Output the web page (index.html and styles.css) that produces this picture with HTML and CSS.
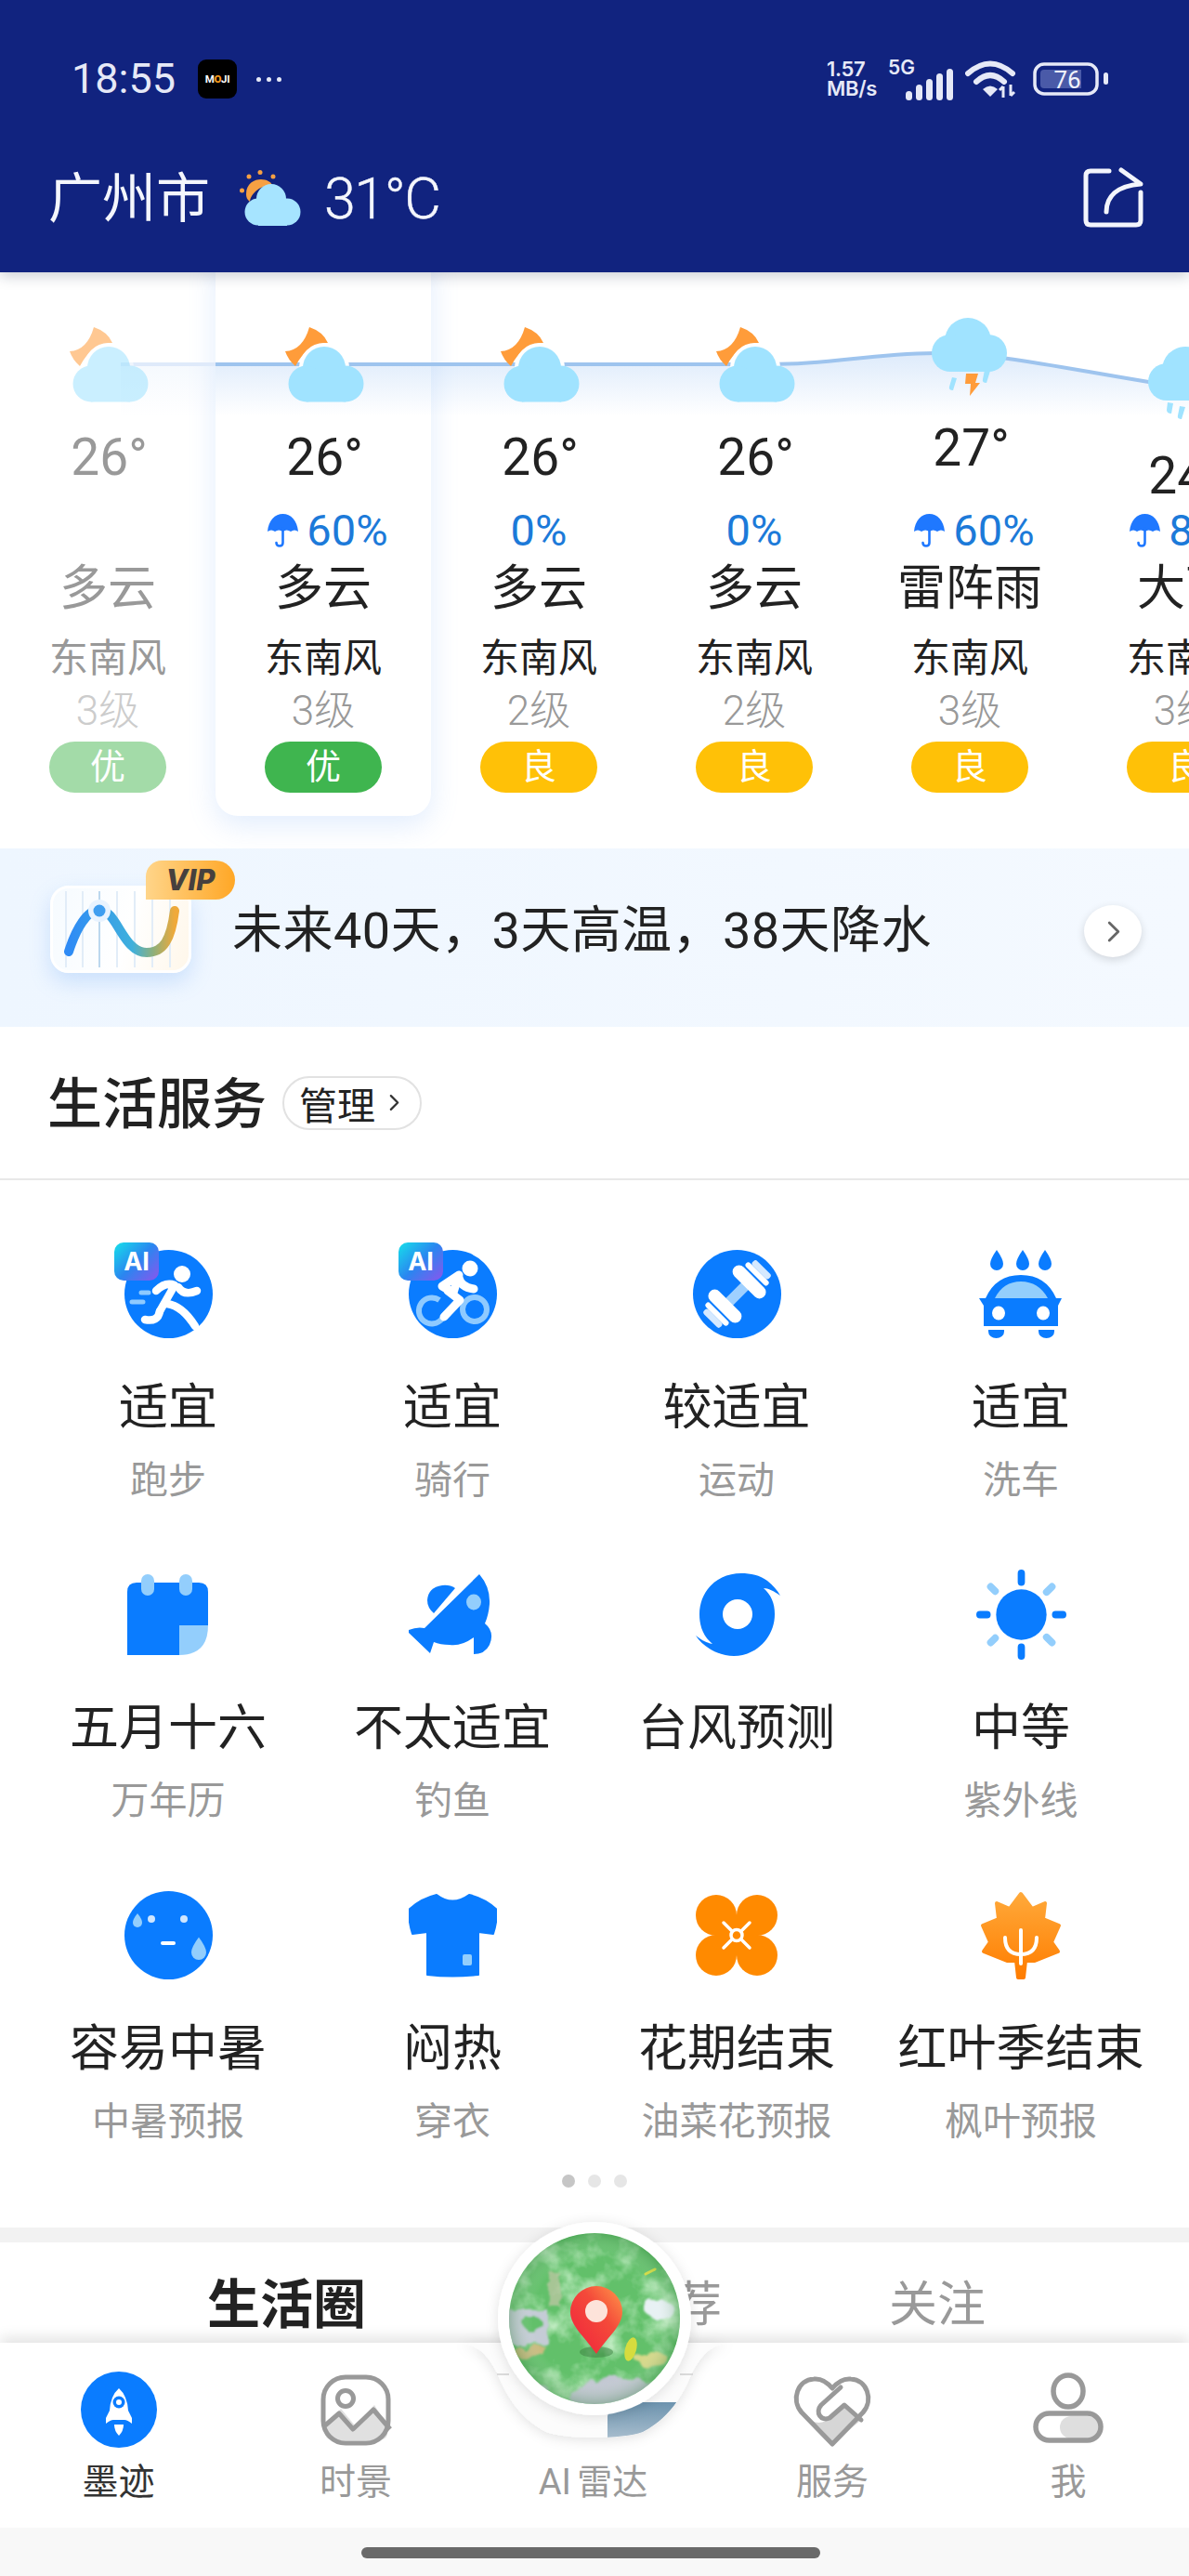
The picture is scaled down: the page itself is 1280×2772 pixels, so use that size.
FILE: index.html
```html
<!DOCTYPE html>
<html lang="zh-CN">
<head>
<meta charset="utf-8">
<title>墨迹天气</title>
<link rel="stylesheet" href="styles.css">
</head>
<body>
<svg class="defs" width="0" height="0" aria-hidden="true">
  <defs>
    <symbol id="partly" viewBox="0 0 100 90">
      <path class="sun" d="M35 7Q50 12 55 24Q33 24 20 49Q12 42 9 33Q28 32 35 7Z"/>
      <circle cx="51" cy="51" r="27" fill="#fff"/>
      <g class="cloud"><circle cx="51" cy="51" r="23"/><circle cx="32" cy="68" r="19.5"/><circle cx="74" cy="68" r="19.5"/><rect x="32" y="60" width="42" height="27.5"/></g>
    </symbol>
    <symbol id="thunder" viewBox="0 0 100 90">
      <g class="cloud"><circle cx="48" cy="27" r="25"/><circle cx="29" cy="40" r="20"/><circle cx="70" cy="40" r="20"/><rect x="29" y="35" width="41" height="25"/></g>
      <path class="rain" d="M31 66l5 1-4 13q-5 0-4-4zM66 58l6 1-4 13q-5 0-4-4z"/>
      <path class="sun" d="M46 62h13l-3 10h5L50 86l1-13h-6z"/>
    </symbol>
    <symbol id="rainy" viewBox="0 0 100 90">
      <g class="cloud"><circle cx="50" cy="27" r="25"/><circle cx="30" cy="40" r="20"/><circle cx="71" cy="40" r="20"/><rect x="30" y="35" width="41" height="25"/></g>
      <path class="rain" d="M31 62l6 1-2 11q-5 0-5-4zM44 66l6 1-4 13q-5 0-4-4z"/>
    </symbol>
    <symbol id="umbrella" viewBox="0 0 33 36">
      <path fill="#1f78ff" d="M16.5 0C8 0 1 7 0 19q4-3 8 0q4-3 8.5 0q4-3 8.500 0q4-3 8 0C32 7 25 0 16.500 0Z"/>
      <path fill="none" stroke="#1f78ff" stroke-width="2.600" stroke-linecap="round" d="M16.500 16V31q0 3.500-3.500 3.500t-3.500-3.500"/>
    </symbol>
  </defs>
</svg>

<div class="page">
  <header class="top">
    <div class="status">
      <span class="time">18:55</span>
      <span class="moji">M<b>O</b>JI</span>
      <span class="more"><i></i><i></i><i></i></span>
      <div class="status-right">
        <span class="speed">1.57<br>MB/s</span>
        <span class="net">
          <span class="fiveg">5G</span>
          <svg class="signal" viewBox="0 0 52 34" width="52" height="34"><g fill="#e6e9f7"><rect x="0" y="24" width="7" height="10" rx="3.500"/><rect x="11" y="17" width="7" height="17" rx="3.500"/><rect x="22" y="11" width="7" height="23" rx="3.500"/><rect x="33" y="5" width="7" height="29" rx="3.500"/><rect x="44" y="0" width="7" height="34" rx="3.500"/></g></svg>
        </span>
        <svg class="wifi" viewBox="0 0 56 40" width="56" height="40"><g fill="none" stroke="#e6e9f7" stroke-width="6" stroke-linecap="round"><path d="M3 14Q27-7 51 14"/><path d="M12 23Q27 9 42 23"/></g><path fill="#e6e9f7" d="M19 31q8-7 16 0l-8 8z"/><path fill="none" stroke="#e6e9f7" stroke-width="3" d="M41 40V28M37 32l4-4M49 26V38M49 38l4-4"/></svg>
        <svg class="battery" viewBox="0 0 82 36" width="82" height="36"><rect x="2" y="2" width="67" height="32" rx="10" fill="none" stroke="#e6e9f7" stroke-width="3.500"/><path d="M12 8h40v20H12q-4 0-4-4V12q0-4 4-4z" fill="#4a5aa8"/><text class="bat-num" x="37" y="28">76</text><rect x="76" y="11" width="5" height="13" rx="2.500" fill="#e6e9f7"/></svg>
      </div>
    </div>
    <div class="title-row">
      <span class="city">广州市</span>
      <svg class="now-icon" viewBox="0 0 66 60" width="66" height="60"><g fill="#f6a043"><circle cx="22" cy="2.500" r="2.500"/><circle cx="10" cy="7" r="2.500"/><circle cx="36" cy="7" r="2.500"/><circle cx="2.500" cy="22" r="2.500"/><path d="M7 26C7 14 16 10 23 10c6 0 11 3 12 6C24 16 12 24 11 34 8 32 7 29 7 26Z"/></g><g fill="#a6e4ff"><circle cx="34" cy="31" r="16"/><circle cx="20" cy="45" r="14.500"/><circle cx="51" cy="45" r="14.500"/><rect x="20" y="40" width="31" height="20"/></g></svg>
      <span class="now-temp">31°C</span>
      <svg class="share" viewBox="0 0 66 66" width="66" height="66"><g fill="none" stroke="#f3f5fc" stroke-width="5" stroke-linecap="round" stroke-linejoin="round"><path d="M28 4H8Q3 4 3 9V57Q3 62 8 62H57Q62 62 62 57V27"/><path d="M25 48C25 32 36 20 62 18L41 3"/></g></svg>
    </div>
  </header>

  <section class="hourly">
    <div class="hour-card"></div>
    <svg class="curve" viewBox="0 0 1280 200" width="1280" height="200">
      <defs><linearGradient id="area" gradientUnits="userSpaceOnUse" x1="0" y1="88" x2="0" y2="155"><stop offset="0" stop-color="#8fbcf2" stop-opacity=".3"/><stop offset="1" stop-color="#8fbcf2" stop-opacity="0"/></linearGradient></defs>
      <path fill="url(#area)" d="M232 99H830C900 99 930 88 1007 87C1080 87 1150 105 1280 125V200H232Z"/>
      <path fill="url(#area)" opacity=".35" d="M130 99H232V200H130Z"/>
      <path fill="none" stroke="#dfeafa" stroke-width="4" d="M130 99H232"/>
      <path fill="none" stroke="#9ec4ee" stroke-width="4" d="M232 99H830C900 99 930 88 1007 87C1080 87 1150 105 1280 125"/>
    </svg>
    <div class="hour-row">
      <article class="hour past">
        <div class="hour-top"><svg class="wx-icon faded"><use href="#partly"/></svg><div class="temp">26°</div></div>
        <div class="pop"></div><div class="wx">多云</div><div class="wind">东南风</div><div class="lvl">3级</div><div class="badge good light">优</div>
      </article>
      <article class="hour">
        <div class="hour-top"><svg class="wx-icon"><use href="#partly"/></svg><div class="temp">26°</div></div>
        <div class="pop"><svg class="umb"><use href="#umbrella"/></svg>60%</div><div class="wx">多云</div><div class="wind">东南风</div><div class="lvl">3级</div><div class="badge good">优</div>
      </article>
      <article class="hour">
        <div class="hour-top"><svg class="wx-icon"><use href="#partly"/></svg><div class="temp">26°</div></div>
        <div class="pop">0%</div><div class="wx">多云</div><div class="wind">东南风</div><div class="lvl">2级</div><div class="badge fair">良</div>
      </article>
      <article class="hour">
        <div class="hour-top"><svg class="wx-icon"><use href="#partly"/></svg><div class="temp">26°</div></div>
        <div class="pop">0%</div><div class="wx">多云</div><div class="wind">东南风</div><div class="lvl">2级</div><div class="badge fair">良</div>
      </article>
      <article class="hour">
        <div class="hour-top high"><svg class="wx-icon"><use href="#thunder"/></svg><div class="temp">27°</div></div>
        <div class="pop"><svg class="umb"><use href="#umbrella"/></svg>60%</div><div class="wx">雷阵雨</div><div class="wind">东南风</div><div class="lvl">3级</div><div class="badge fair">良</div>
      </article>
      <article class="hour">
        <div class="hour-top low"><svg class="wx-icon"><use href="#rainy"/></svg><div class="temp">24°</div></div>
        <div class="pop"><svg class="umb"><use href="#umbrella"/></svg>80%</div><div class="wx">大雨</div><div class="wind">东南风</div><div class="lvl">3级</div><div class="badge fair">良</div>
      </article>
    </div>
  </section>

  <section class="forecast">
    <div class="fc-icon">
      <svg viewBox="0 0 152 94" width="152" height="94">
        <defs><linearGradient id="fcline" x1="0" x2="1" y1="0" y2="0"><stop offset="0" stop-color="#2f8bf5"/><stop offset=".6" stop-color="#3fb0dc"/><stop offset=".8" stop-color="#8fb07a"/><stop offset="1" stop-color="#f0a93a"/></linearGradient></defs>
        <g stroke="#e2edf8" stroke-width="2"><path d="M17 6V88M35 6V88M72 6V88M91 6V88M110 6V88M129 6V88"/></g>
        <path stroke="#bcd8ee" stroke-width="2" d="M53 6V88"/>
        <path fill="none" stroke="url(#fcline)" stroke-width="10" stroke-linecap="round" d="M20 71C28 46 40 26 53 26C72 26 78 72 104 72C122 72 130 58 134 27"/>
        <circle cx="53" cy="27" r="12" fill="#e8f3ff"/><circle cx="53" cy="27" r="6.500" fill="#3f9ef0"/>
      </svg>
      <span class="vip">VIP</span>
    </div>
    <span class="fc-text">未来40天，3天高温，38天降水</span>
    <span class="fc-go"><svg viewBox="0 0 20 30" width="16" height="25"><path d="M4 3l12 12L4 27" fill="none" stroke="#666" stroke-width="3.500" stroke-linecap="round" stroke-linejoin="round"/></svg></span>
  </section>

  <section class="svc-head">
    <h2 class="svc-title">生活服务</h2>
    <span class="manage">管理<svg viewBox="0 0 12 20" width="11" height="19"><path d="M2 2l8 8-8 8" fill="none" stroke="#333" stroke-width="2.500" stroke-linecap="round" stroke-linejoin="round"/></svg></span>
  </section>

  <section class="services">
    <div class="grid">
      <div class="cell">
        <div class="ico">
          <svg viewBox="0 0 95 95" width="95" height="95"><circle cx="47.500" cy="47.500" r="47.500" fill="#0a7cff"/><circle cx="62" cy="26" r="9" fill="#fff"/><g fill="none" stroke="#fff" stroke-width="8.500" stroke-linecap="round" stroke-linejoin="round"><path d="M34 44Q44 34 54 38L38 66"/><path d="M58 40Q64 50 78 44"/><path d="M46 58Q62 60 76 82"/><path d="M38 66Q36 78 22 75"/></g><g stroke="#8fcaff" stroke-width="5" stroke-linecap="round"><path d="M18 46H26M8 56H20"/></g></svg>
          <span class="ai">AI</span>
        </div>
        <div class="val">适宜</div><div class="sub">跑步</div>
      </div>
      <div class="cell">
        <div class="ico">
          <svg viewBox="0 0 95 95" width="95" height="95"><circle cx="47.500" cy="47.500" r="47.500" fill="#0a7cff"/><g fill="none" stroke="#8fcaff" stroke-width="6"><path d="M33 54A14 14 0 1 0 36 74"/><circle cx="71" cy="64" r="13"/></g><circle cx="66" cy="20" r="8.500" fill="#fff"/><g fill="none" stroke="#fff" stroke-width="9" stroke-linecap="round" stroke-linejoin="round"><path d="M36 39L54 27L48 46L36 39"/><path d="M54 30Q56 40 70 42"/><path d="M42 44L55 54L38 72"/></g></svg>
          <span class="ai">AI</span>
        </div>
        <div class="val">适宜</div><div class="sub">骑行</div>
      </div>
      <div class="cell">
        <div class="ico">
          <svg viewBox="0 0 95 95" width="95" height="95"><circle cx="47.500" cy="47.500" r="47.500" fill="#0a7cff"/><g transform="rotate(-45 47.500 47.500)"><rect x="24" y="42" width="47" height="11" fill="#9fd0ff"/><rect x="7" y="35" width="7" height="25" rx="3" fill="#d5e9ff"/><rect x="81" y="35" width="7" height="25" rx="3" fill="#d5e9ff"/><rect x="14" y="31" width="6" height="33" rx="3" fill="#fff"/><rect x="75" y="31" width="6" height="33" rx="3" fill="#fff"/><rect x="22" y="25" width="14" height="45" rx="7" fill="#fff"/><rect x="59" y="25" width="14" height="45" rx="7" fill="#fff"/></g></svg>
        </div>
        <div class="val">较适宜</div><div class="sub">运动</div>
      </div>
      <div class="cell">
        <div class="ico">
          <svg viewBox="0 0 95 95" width="95" height="95"><g fill="#0a7cff"><path d="M21 0Q28 10 28 15a7 7 0 0 1-14 0Q14 10 21 0Z"/><path d="M49 0Q56 10 56 15a7 7 0 0 1-14 0Q42 10 49 0Z"/><path d="M73 0Q80 10 80 15a7 7 0 0 1-14 0Q66 10 73 0Z"/><path d="M7 82V60L2 52H9Q20 27 47 27Q74 27 85 52H91L87 60V82Z"/><path d="M12 86H29V88A8.500 7 0 0 1 12 88Z"/><path d="M66 86H83V88A8.500 7 0 0 1 66 88Z"/></g><path d="M19 52Q28 34 47 34Q66 34 76 52Z" fill="#93cefc"/><ellipse cx="23" cy="68" rx="7" ry="7.500" fill="#fff"/><ellipse cx="71" cy="68" rx="7" ry="7.500" fill="#fff"/></svg>
        </div>
        <div class="val">适宜</div><div class="sub">洗车</div>
      </div>

      <div class="cell">
        <div class="ico">
          <svg viewBox="0 0 95 95" width="95" height="95"><path d="M13 13H80Q90 13 90 23V59H59V91H3V23Q3 13 13 13Z" fill="#0a7cff"/><path d="M59 59H90Q90 91 59 91Z" fill="#93cefc"/><rect x="18" y="4" width="14" height="23" rx="7" fill="#93cefc"/><rect x="59" y="4" width="14" height="23" rx="7" fill="#93cefc"/></svg>
        </div>
        <div class="val">五月十六</div><div class="sub">万年历</div>
      </div>
      <div class="cell">
        <div class="ico">
          <svg viewBox="0 0 95 95" width="95" height="95"><g transform="translate(-2 0)"><path fill="#0a7cff" d="M78 4Q90 18 89 36Q88 48 84 57Q95 66 89 80Q84 90 72 90V72Q58 82 46 80Q36 80 29 77L25 89L0 65Q10 60 19 62Z"/><path fill="#0a7cff" d="M52 19L29 46Q22 40 22 32Q23 18 38 16Q46 15 52 19Z"/><ellipse cx="72" cy="34" rx="8" ry="8.500" fill="#93cefc"/></g></svg>
        </div>
        <div class="val">不太适宜</div><div class="sub">钓鱼</div>
      </div>
      <div class="cell">
        <div class="ico">
          <svg viewBox="0 0 95 95" width="95" height="95"><path fill="#0a7cff" d="M52 3C62 3 72 5 80 11C86 16 91 21 94 27C87 22 81 19 76 19C84 26 88 35 88 47C88 72 68 92 44 92C30 92 12 84 3 70C9 75 15 78 21 79C10 70 7 58 7 47C7 22 26 3 52 3Z"/><ellipse cx="48" cy="47" rx="16" ry="16" fill="#fff"/></svg>
        </div>
        <div class="val">台风预测</div><div class="sub"></div>
      </div>
      <div class="cell">
        <div class="ico">
          <svg viewBox="0 0 100 100" width="97" height="97"><circle cx="50" cy="50" r="28" fill="#0a7cff"/><g stroke="#0a7cff" stroke-width="8" stroke-linecap="round"><path d="M50 4V14M50 86V96M4 50H12M88 50H96"/></g><g stroke="#93cefc" stroke-width="8" stroke-linecap="round"><path d="M16 19L21 24M84 19L78 25M16 81L21 76M84 81L78 75"/></g></svg>
        </div>
        <div class="val">中等</div><div class="sub">紫外线</div>
      </div>

      <div class="cell">
        <div class="ico">
          <svg viewBox="0 0 95 95" width="95" height="95"><circle cx="47.500" cy="47.500" r="47.500" fill="#0a7cff"/><circle cx="29" cy="30" r="4" fill="#cfe6ff"/><circle cx="64" cy="30" r="4" fill="#cfe6ff"/><path d="M41 56H53" stroke="#fff" stroke-width="4" stroke-linecap="round"/><path d="M80 48Q89 60 89 66a9 9 0 0 1-18 0Q71 60 80 48Z" fill="#93cefc" stroke="#0a7cff" stroke-width="2"/><path d="M14 24Q19 30 19 34a5 5 0 0 1-10 0Q9 30 14 24Z" fill="#93cefc"/></svg>
        </div>
        <div class="val">容易中暑</div><div class="sub">中暑预报</div>
      </div>
      <div class="cell">
        <div class="ico">
          <svg viewBox="0 0 95 95" width="95" height="95"><path fill="#0a7cff" stroke="#0a7cff" stroke-width="2" stroke-linejoin="round" d="M30 4Q47 17 65 4Q82 8 95 20Q95 34 91 46L75 44V90Q47 93 20 90V44L4 46Q0 34 0 20Q13 8 30 4Z"/><rect x="58" y="68" width="10" height="12" rx="2" fill="#93cefc"/></svg>
        </div>
        <div class="val">闷热</div><div class="sub">穿衣</div>
      </div>
      <div class="cell">
        <div class="ico">
          <svg viewBox="0 0 95 95" width="95" height="95"><g fill="#ff8a00"><circle cx="25" cy="26" r="22"/><circle cx="69" cy="26" r="22"/><circle cx="25" cy="69" r="22"/><circle cx="69" cy="69" r="22"/><rect x="25" y="26" width="44" height="43"/></g><g fill="none" stroke="#fff" stroke-width="3.500" stroke-linecap="round"><path d="M33 34L42 43M61 34L52 43M33 61L42 52M61 61L52 52"/><circle cx="47" cy="47.500" r="6"/></g></svg>
        </div>
        <div class="val">花期结束</div><div class="sub">油菜花预报</div>
      </div>
      <div class="cell">
        <div class="ico">
          <svg viewBox="0 0 95 95" width="95" height="95"><defs><linearGradient id="leaf" x1="0" x2="0" y1="0" y2="1"><stop offset="0" stop-color="#ffa93a"/><stop offset="1" stop-color="#ff7d00"/></linearGradient></defs><path fill="url(#leaf)" stroke="url(#leaf)" stroke-width="4" stroke-linejoin="round" d="M47 3L59 19L73 13L71 30L88 37L80 55L87 65L62 75H52L50 93H44L42 75H32L7 65L14 55L6 37L23 30L21 13L35 19Z"/><g fill="none" stroke="#fff" stroke-width="4" stroke-linecap="round"><path d="M47 78V42"/><path d="M30 50Q30 68 47 68Q64 68 64 50"/></g></svg>
        </div>
        <div class="val">红叶季结束</div><div class="sub">枫叶预报</div>
      </div>
    </div>
    <div class="dots"><i class="on"></i><i></i><i></i></div>
  </section>

  <div class="band"></div>

  <section class="tabs">
    <span class="tab active">生活圈</span>
    <span class="tab rec">推荐</span>
    <span class="tab follow">关注</span>
  </section>

  <nav class="nav">
    <svg class="radar" viewBox="0 0 340 245" width="340" height="245">
      <defs>
        <clipPath id="disc"><circle cx="170" cy="110" r="92"/></clipPath>
        <clipPath id="bumpclip"><path d="M20 136C45 136 55 150 65 168C72 185 85 215 118 232C140 240 200 240 222 232C255 215 268 185 275 168C285 150 295 136 320 136Z"/></clipPath>
        <filter id="mottle" x="-10%" y="-10%" width="120%" height="120%"><feTurbulence type="fractalNoise" baseFrequency=".05" numOctaves="3" seed="4"/><feDisplacementMap in="SourceGraphic" scale="16"/><feGaussianBlur stdDeviation="1"/></filter>
        <filter id="noise" x="0" y="0" width="100%" height="100%"><feTurbulence type="fractalNoise" baseFrequency=".03" numOctaves="4" seed="7"/><feColorMatrix values="0 0 0 0 .68  0 0 0 0 .93  0 0 0 0 .68  2 0 0 0 -.85"/></filter>
        <filter id="soft" x="-20%" y="-20%" width="140%" height="140%"><feDropShadow dx="0" dy="2" stdDeviation="7" flood-color="#000" flood-opacity=".12"/></filter>
        <radialGradient id="shade" cx=".5" cy=".5" r=".5"><stop offset=".72" stop-color="#fff" stop-opacity="0"/><stop offset="1" stop-color="#2f7a3a" stop-opacity=".3"/></radialGradient>
        <linearGradient id="pin" x1="0" x2="1" y1="1" y2="0"><stop offset="0" stop-color="#f0203c"/><stop offset=".6" stop-color="#f44a3a"/><stop offset="1" stop-color="#ff9a4a"/></linearGradient>
        <linearGradient id="slate" x1="0" x2="0" y1="0" y2="1"><stop offset="0" stop-color="#6c93ae"/><stop offset="1" stop-color="#a9bece"/></linearGradient>
      </defs>
      <path fill="#fcfcfc" filter="url(#soft)" d="M20 136C45 136 55 150 65 168C72 185 85 215 118 232C140 240 200 240 222 232C255 215 268 185 275 168C285 150 295 136 320 136Z"/>
      <path stroke="#cfcfcf" stroke-width="1.500" d="M65 170H78M262 170H276"/>
      <path fill="url(#slate)" clip-path="url(#bumpclip)" d="M184 240V215Q186 204 200 200H258V240Z"/>
      <circle cx="170" cy="110" r="104" fill="#fff" filter="url(#soft)"/>
      <g clip-path="url(#disc)">
        <rect x="70" y="10" width="200" height="200" fill="#62c06a"/>
        <rect x="70" y="10" width="200" height="200" filter="url(#noise)"/>
        <g filter="url(#mottle)">
          <rect x="74" y="100" width="46" height="38" fill="#c5ccd6"/>
          <ellipse cx="104" cy="116" rx="10" ry="9" fill="#62c06a"/>
          <rect x="120" y="60" width="12" height="36" fill="#c4c8a8" opacity=".7"/>
          <rect x="84" y="140" width="34" height="11" fill="#c9bb7f"/>
          <ellipse cx="240" cy="100" rx="15" ry="11" fill="#e8f1f4"/>
          <ellipse cx="205" cy="194" rx="62" ry="20" fill="#c2c7d2"/>
          <ellipse cx="106" cy="190" rx="16" ry="10" fill="#c2c7d2"/>
          <ellipse cx="232" cy="154" rx="18" ry="7" fill="#d6d888"/>
        </g>
        <ellipse cx="209" cy="143" rx="6" ry="13" fill="#d6dc3e" transform="rotate(15 209 143)"/>
        <path d="M225 62l10-5" stroke="#d6dc3e" stroke-width="3" stroke-linecap="round"/>
        <circle cx="170" cy="110" r="92" fill="url(#shade)"/>
      </g>
      <ellipse cx="172" cy="146" rx="18" ry="6" fill="#3a7d3e" opacity=".5"/>
      <path fill="url(#pin)" d="M172 148C160 130 144 118 144 103A28 28 0 1 1 200 103C200 118 184 130 172 148Z"/>
      <circle cx="172" cy="102" r="12" fill="#fde3da"/>
    </svg>
    <div class="nav-item active">
      <svg class="nav-ico" viewBox="0 0 82 82" width="82" height="82"><circle cx="41" cy="41" r="41" fill="#0a7cff"/><path fill="#fff" d="M41 18Q50 26 51 42L55 50V56Q50 52 47 52H35Q32 52 27 56V50L31 42Q32 26 41 18Z"/><circle cx="41" cy="33" r="6.500" fill="#0a7cff"/><circle cx="41" cy="33" r="3" fill="#fff"/><path fill="#fff" d="M36 57H46Q46 64 41 69Q36 64 36 57Z"/></svg>
      <span class="nav-label">墨迹</span>
    </div>
    <div class="nav-item">
      <svg class="nav-ico" viewBox="0 0 82 82" width="82" height="82"><path fill="#e0e0e0" d="M8 58L25 40L40 58L61 36L75 58V66Q75 74 63 74H20Q8 74 8 66Z"/><g fill="none" stroke="#999" stroke-width="5"><rect x="6" y="6" width="70" height="71" rx="24"/><circle cx="30" cy="29" r="8.500"/><path d="M8 58L23 45L38 62L60 41L78 62" stroke-linejoin="round"/></g></svg>
      <span class="nav-label">时景</span>
    </div>
    <div class="nav-item center">
      <span class="nav-ico"></span>
      <span class="nav-label radar-label">AI 雷达</span>
    </div>
    <div class="nav-item">
      <svg class="nav-ico wide" viewBox="0 0 90 82" width="90" height="82"><path fill="#d6d6d6" d="M14 48Q32 62 44 48L58 38L76 52L45 78Z"/><g fill="none" stroke="#999" stroke-width="5" stroke-linecap="round" stroke-linejoin="round"><path d="M45 78L12 44C0 30 8 9 25 8C34 7 40 12 45 18C50 12 56 7 65 8C82 9 90 30 78 44Z"/><path d="M54 17L33 36C26 44 33 54 42 50L58 36L76 52"/></g></svg>
      <span class="nav-label">服务</span>
    </div>
    <div class="nav-item">
      <svg class="nav-ico" viewBox="0 0 82 82" width="82" height="82"><rect x="32" y="48" width="42" height="24" rx="12" fill="#dedede"/><g fill="none" stroke="#999" stroke-width="5.500"><ellipse cx="41" cy="21" rx="16" ry="17"/><rect x="6" y="45" width="70" height="29" rx="14.500"/></g></svg>
      <span class="nav-label">我</span>
    </div>
  </nav>

  <div class="gesture"><span class="home-bar"></span></div>
</div>
</body>
</html>
```

FILE: styles.css
```css
* { box-sizing: border-box; margin: 0; padding: 0; }
html, body { background: #fff; }
body { width: 1280px; height: 2772px; overflow: hidden; font-family: Roboto, "Noto Sans CJK SC", sans-serif; color: #222; }
.defs { position: absolute; }
.page { width: 1280px; height: 2772px; display: flex; flex-direction: column; overflow: hidden; }

/* header */
.top { height: 293px; background: #11237f; padding: 60px 48px 0 52px; position: relative; z-index: 5; box-shadow: 0 4px 14px rgba(20,30,60,.22); flex: none; }
.status { height: 50px; display: flex; align-items: center; padding-left: 25px; color: #e6e9f7; }
.time { font-size: 45px; font-weight: 400; width: 115px; line-height: 50px; }
.moji { width: 42px; height: 42px; margin-left: 21px; background: #000; border-radius: 9px; color: #fff; font-size: 11.500px; font-weight: 700; line-height: 42px; text-align: center; letter-spacing: -.3px; }
.moji b { color: #f79a1e; }
.more { display: flex; gap: 6px; margin-left: 21px; }
.more i { width: 5px; height: 5px; border-radius: 50%; background: #e6e9f7; }
.status-right { margin-left: auto; margin-right: 38px; display: flex; align-items: center; }
.speed { font-family: Inter, sans-serif; font-weight: 600; font-size: 22px; line-height: 21px; width: 66px; letter-spacing: -.3px; }
.net { position: relative; width: 71px; height: 46px; display: block; }
.fiveg { position: absolute; left: 0; top: 0; font-family: Inter, sans-serif; font-weight: 600; font-size: 21px; line-height: 22px; }
.signal { position: absolute; right: 0; bottom: 0; }
.wifi { margin-left: 12px; }
.battery { margin-left: 17px; }
.bat-num { font-family: Roboto, sans-serif; font-size: 26px; fill: #f0f2fb; text-anchor: middle; }
.title-row { display: flex; align-items: center; height: 66px; margin-top: 70px; }
.city { font-size: 58px; line-height: 68px; color: #f4f6fc; padding-top: 2px; }
.now-icon { margin-left: 32px; }
.now-temp { font-size: 61px; font-weight: 300; margin-left: 25px; color: #f4f6fc; line-height: 68px; letter-spacing: -1.500px; padding-top: 2px; -webkit-text-stroke: .4px #f4f6fc; }
.share { margin-left: auto; }

/* hourly */
.hourly { height: 620px; position: relative; overflow: hidden; flex: none; background: #fff; }
.hour-card { position: absolute; left: 232px; top: -30px; width: 232px; height: 615px; background: #fff; border-radius: 24px; box-shadow: 0 10px 30px rgba(110,165,245,.2); }
.curve { position: absolute; left: 0; top: 0; }
.hour-row { position: relative; display: flex; width: 1392px; }
.hour { width: 232px; flex: none; display: flex; flex-direction: column; align-items: center; }
.hour-top { height: 250px; padding-top: 52px; display: flex; flex-direction: column; align-items: center; }
.hour-top.high { padding-top: 47px; }
.hour-top.high .temp { margin-top: 22px; }
.hour-top.low { padding-top: 78px; }
.hour-top.low .temp { margin-top: 21px; }
.wx-icon { width: 100px; height: 90px; flex: none; }
.wx-icon.faded { opacity: .55; }
.sun { fill: #ff9c3a; }
.cloud { fill: #a0e3ff; }
.rain { fill: #a0e3ff; }
.temp { font-size: 55px; font-weight: 400; line-height: 60px; margin-top: 27px; padding-left: 3px; color: #222; }
.pop { height: 56px; display: flex; align-items: center; gap: 9px; font-size: 47px; font-weight: 400; color: #1c7ad9; line-height: 56px; }
.umb { width: 33px; height: 36px; margin-left: 10px; }
.wx { font-size: 52px; line-height: 60px; margin-top: 5px; color: #222; }
.wind { font-size: 42px; line-height: 56px; margin-top: 17px; color: #222; }
.lvl { font-size: 44px; line-height: 56px; margin-top: 0; color: #999; font-weight: 300; }
.badge { width: 126px; height: 55px; border-radius: 28px; margin-top: 5px; color: #fff; font-size: 38px; line-height: 55px; text-align: center; }
.good { background: #3fb54f; }
.good.light { background: #a3dba8; }
.fair { background: #ffc107; }
.past .temp, .past .wx, .past .wind { color: #999; }
.past .lvl { color: #ccc; }

/* forecast banner */
.forecast { height: 192px; flex: none; background: linear-gradient(90deg, #eef6ff, #f4f9ff); display: flex; align-items: center; padding: 0 51px 0 54px; position: relative; }
.fc-icon { width: 152px; height: 94px; position: relative; background: linear-gradient(105deg, #f6fbff, #fff 55%, #fff7ea); border: 3px solid #fff; border-radius: 20px; box-shadow: 0 10px 22px rgba(110,170,245,.28); flex: none; margin-bottom: 18px; }
.fc-icon svg { position: absolute; left: -3px; top: -3px; }
.vip { position: absolute; left: 100px; top: -30px; width: 96px; height: 42px; background: linear-gradient(90deg, #ffd58a, #ffa726); border-radius: 18px 22px 22px 0; color: #46403e; font: italic 800 31px/42px Inter, sans-serif; text-align: center; }
.fc-text { font-size: 54px; line-height: 64px; margin-left: 44px; color: #222; white-space: nowrap; letter-spacing: .45px; margin-bottom: 14px; }
.fc-go { margin-left: auto; width: 62px; height: 56px; border-radius: 50%; background: #fff; box-shadow: 0 3px 10px rgba(0,0,0,.14); display: flex; align-items: center; justify-content: center; padding-left: 2px; margin-bottom: 14px; }

/* services */
.svc-head { height: 165px; flex: none; display: flex; align-items: center; padding-left: 51px; border-bottom: 2px solid #e8e8e8; background: #fff; }
.svc-title { font-size: 59px; font-weight: 500; line-height: 70px; color: #222; padding-top: 5px; }
.manage { margin-left: 17px; height: 58px; width: 150px; border: 2px solid #e2e2e2; border-radius: 29px; display: flex; align-items: center; justify-content: center; gap: 15px; font-size: 41px; color: #222; padding-right: 6px; }
.services { height: 1127px; flex: none; background: #fff; padding-top: 74px; }
.grid { display: grid; grid-template-columns: repeat(4, 306px); grid-auto-rows: 272px; row-gap: 73px; padding-left: 28px; }
.cell { display: flex; flex-direction: column; align-items: center; }
.ico { width: 96px; height: 96px; position: relative; display: flex; align-items: center; justify-content: center; flex: none; }
.ico svg { flex: none; }
.ai { position: absolute; left: -10px; top: -7px; width: 48px; height: 41px; border-radius: 10px; background: linear-gradient(135deg, #16e0ea 0%, #2a86f0 50%, #8a55ee 100%); color: #fff; font: 700 27px/41px Inter, sans-serif; text-align: center; }
.val { font-size: 53px; line-height: 60px; margin-top: 45px; color: #222; white-space: nowrap; }
.sub { font-size: 41px; line-height: 50px; margin-top: 23px; color: #999; white-space: nowrap; }
.dots { display: flex; justify-content: center; gap: 14px; margin-top: 34px; }
.dots i { width: 14px; height: 14px; border-radius: 50%; background: #e6e6e6; }
.dots i.on { background: #c6c6c6; }
.band { height: 16px; flex: none; background: #f2f2f2; }

/* tabs */
.tabs { height: 108px; flex: none; background: #fff; display: flex; align-items: center; padding: 28px 0 0 223px; }
.tab { font-size: 52px; line-height: 60px; color: #999; white-space: nowrap; }
.tab.active { font-size: 57px; font-weight: 700; color: #222; }
.tab.rec { margin-left: 279px; }
.tab.follow { margin-left: 180px; }

/* bottom nav */
.nav { height: 199px; flex: none; background: #fff; position: relative; display: grid; grid-template-columns: 255px 256px 258px 254px 254px; box-shadow: 0 -6px 14px rgba(0,0,0,.11); z-index: 3; }
.radar { position: absolute; left: 470px; top: -136px; overflow: visible; }
.nav-item { display: flex; flex-direction: column; align-items: center; padding-top: 31px; position: relative; }
.nav-ico { height: 82px; width: 82px; flex: none; display: block; }
.nav-ico.wide { width: 90px; }
.nav-label { font-size: 39px; line-height: 46px; margin-top: 14px; color: #999; white-space: nowrap; }
.nav-item.active .nav-label { color: #333; }
.radar-label { font-size: 38px; word-spacing: -3px; margin-left: -3px; }
.gesture { height: 52px; flex: none; background: #f8f8f8; position: relative; z-index: 4; display: flex; justify-content: center; padding-top: 21px; }
.home-bar { width: 494px; height: 12px; border-radius: 6px; background: #6a6a6a; margin-left: -8px; }
```
